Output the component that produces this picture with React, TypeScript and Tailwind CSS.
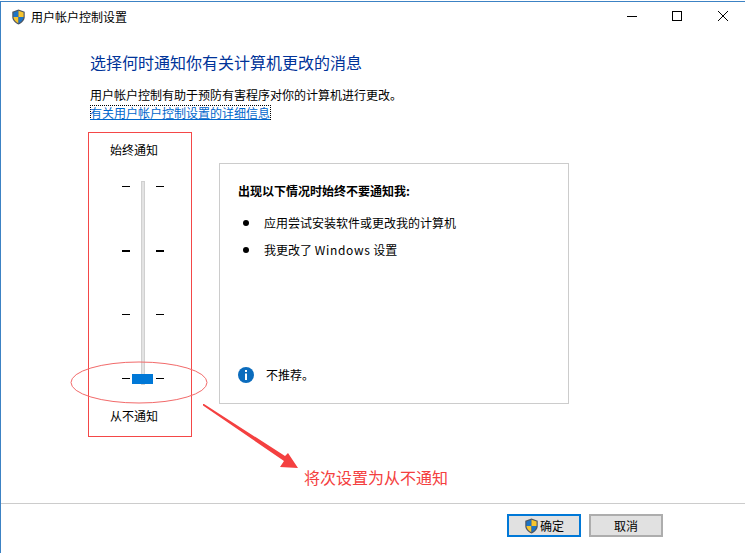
const FONT = "font-['Noto_Sans_CJK_SC','Noto_Sans',sans-serif]";

const Shield = ({ className }: { className: string }) => (
  <svg viewBox="0 0 16 18" className={className}>
    <path d="M8 .5 L15 3 V9 C15 13 11.5 16 8 17.5 C4.5 16 1 13 1 9 V3 Z" fill="#4d5560" />
    <path d="M8 2 V9 H2.3 V4 Z" fill="#1f74c4" />
    <path d="M8 2 L13.7 4 V9 H8 Z" fill="#f7c52e" />
    <path d="M2.3 9 H8 V16 C5 14.7 2.6 12.4 2.3 9 Z" fill="#f7c52e" />
    <path d="M8 9 H13.7 C13.4 12.4 11 14.7 8 16 Z" fill="#1f74c4" />
  </svg>
);

const Tick = ({ thick }: { thick?: boolean }) => (
  <div className="flex h-[2px] w-[42px] justify-between">
    <div className={`w-2 bg-black ${thick ? "h-[2px]" : "h-px"}`} />
    <div className={`w-2 bg-black ${thick ? "h-[2px]" : "h-px"}`} />
  </div>
);

const Slider = () => (
  <div className="relative ml-[33px] mt-[23px] flex h-[204px] w-[42px] flex-col gap-[62px] pt-[5px]">
    <div className="absolute left-[19px] top-0 h-[204px] w-1 border border-[#d0d0d0] bg-[#e3e3e3]" />
    <Tick />
    <Tick thick />
    <Tick />
    <Tick />
    <div className="absolute left-[10px] top-[193px] h-[10px] w-[21px] bg-[#0078d7]" />
  </div>
);

const Button = ({ primary, children }: { primary?: boolean; children: React.ReactNode }) => (
  <button
    className={`flex h-[23px] w-[74px] items-center justify-center border-2 bg-[#e1e1e1] text-[12px] text-black ${
      primary ? "border-[#0078d7]" : "border-[#adadad]"
    }`}
  >
    {children}
  </button>
);

export default function App() {
  return (
    <div className={`relative flex h-[553px] w-[745px] flex-col overflow-hidden bg-white pt-px ${FONT}`}>
      <div className="flex h-[552px] flex-col border-l border-t border-[#3c82c4]">
        {/* title bar */}
        <div className="flex h-[28px] shrink-0 items-center">
          <Shield className="ml-[10px] mt-[1px] h-[16px] w-[15px]" />
          <span className="ml-[5px] mt-[1px] text-[12px] text-black">用户帐户控制设置</span>
          <div className="ml-auto flex items-center">
            <svg width="12" height="12" viewBox="0 0 12 12" className="mr-[33px]">
              <path d="M1 6.5H11" stroke="#000" />
            </svg>
            <svg width="12" height="12" viewBox="0 0 12 12" className="mr-[34px]">
              <rect x="1.5" y="1.5" width="9" height="9" fill="none" stroke="#000" />
            </svg>
            <svg width="12" height="12" viewBox="0 0 12 12" className="mr-[16px]">
              <path d="M1 1L11 11M11 1L1 11" stroke="#000" />
            </svg>
          </div>
        </div>

        {/* content */}
        <div className="flex flex-1 flex-col pl-[89px]">
          <h1 className="mt-[20px] text-[16px] leading-[24px] text-[#003399]">选择何时通知你有关计算机更改的消息</h1>
          <p className="mt-[13px] text-[12px] leading-[16px] text-black">
            用户帐户控制有助于预防有害程序对你的计算机进行更改。
          </p>
          <div className="mt-[2px] flex">
            <a className="h-[15px] w-[181px] whitespace-nowrap border border-dotted border-black text-[12px] leading-[13px] text-[#0066cc] underline">
              <span className="-ml-px">有关用户帐户控制设置的详细信息</span>
            </a>
          </div>

          <div className="mt-[12px] flex">
            <div className="-ml-[2px] flex h-[305px] w-[104px] flex-col border border-[#f44848]">
              <div className="ml-[21px] mt-[9px] text-[12px] leading-[16px] text-black">始终通知</div>
              <Slider />
              <div className="ml-[21px] mt-[23px] text-[12px] leading-[16px] text-black">从不通知</div>
            </div>
            <div className="ml-[27px] mt-[31px] flex h-[241px] w-[350px] flex-col border border-[#cccccc] pl-[18px]">
              <div className="mt-[19px] text-[12px] font-bold leading-[16px] text-black">出现以下情况时始终不要通知我:</div>
              <ul className="mt-[16px] flex flex-col gap-[11px] text-[12px] leading-[16px] text-black">
                <li className="flex items-center">
                  <span className="ml-[5px] h-[6px] w-[6px] rounded-full bg-black" />
                  <span className="ml-[15px]">应用尝试安装软件或更改我的计算机</span>
                </li>
                <li className="flex items-center">
                  <span className="ml-[5px] h-[6px] w-[6px] rounded-full bg-black" />
                  <span className="ml-[15px]">
                    我更改了 <span className="tracking-[0.7px]">Windows</span> 设置
                  </span>
                </li>
              </ul>
              <div className="mb-[20px] mt-auto flex items-center">
                <svg width="16" height="16" viewBox="0 0 16 16">
                  <circle cx="8" cy="8" r="8" fill="#0b6cbd" />
                  <rect x="7" y="3" width="2" height="2" fill="#fff" />
                  <rect x="7" y="6.5" width="2" height="6.5" fill="#fff" />
                </svg>
                <span className="ml-[12px] text-[12px] leading-[16px] text-black">不推荐。</span>
              </div>
            </div>
          </div>
        </div>

        {/* footer */}
        <div className="flex h-[50px] shrink-0 justify-end gap-2 border-t border-[#cccccc] pr-[82px] pt-[10px]">
          <Button primary>
            <Shield className="mr-[1px] h-[16px] w-[15px]" />
            确定
          </Button>
          <Button>取消</Button>
        </div>
      </div>

      {/* red annotations */}
      <svg width="745" height="553" className="pointer-events-none absolute left-0 top-0">
        <ellipse cx="139" cy="382.5" rx="68" ry="20.5" fill="none" stroke="#f26a6a" strokeWidth="1" />
        <polygon points="203,404 204,404 285,456 288,453 298,468 280,467 284,461 203,405.5" fill="#f44040" />
      </svg>
      <div className="absolute left-[304px] top-[465px] text-[16px] leading-[24px] text-[#f44040]">将次设置为从不通知</div>
    </div>
  );
}
